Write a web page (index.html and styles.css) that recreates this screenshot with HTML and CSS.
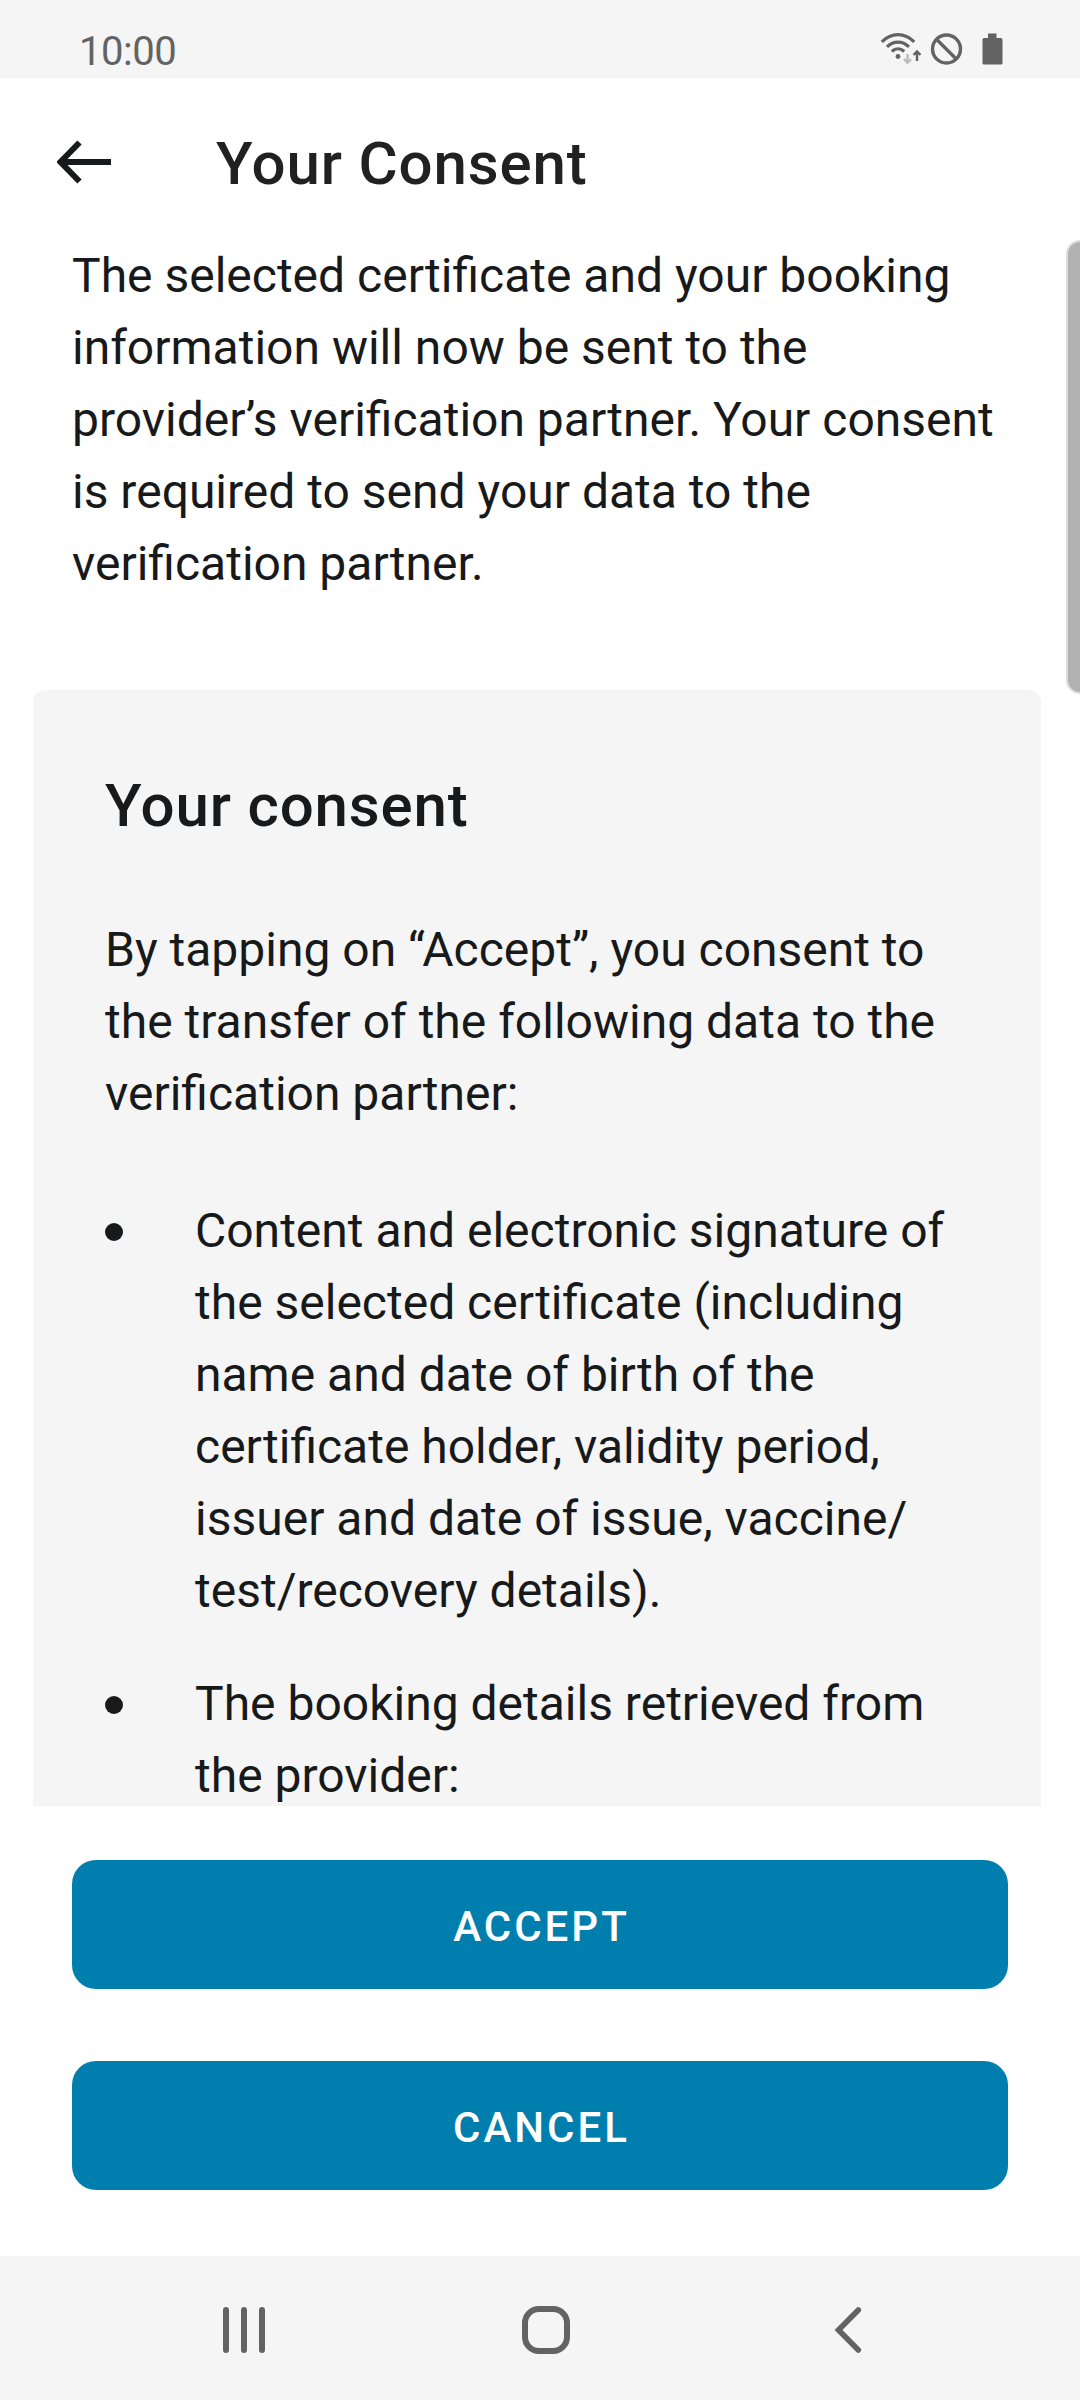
FILE: index.html
```html
<!DOCTYPE html>
<html lang="en">
<head>
<meta charset="utf-8">
<title>Your Consent</title>
<link rel="stylesheet" href="styles.css">
</head>
<body>
<div class="screen">
  <div class="status-bar">
    <span class="clock">10:00</span>
    <svg class="status-icons" width="140" height="48" viewBox="0 0 140 48" aria-hidden="true">
      <g fill="none" stroke="#636363" stroke-width="3.2">
        <path d="M1.8 16.8C11.5 7.2 24.5 7.2 34.200 16.800"/>
        <path d="M7 21.800C13.500 15.500 22.500 15.500 29 21.800"/>
        <path d="M11.800 26.500C15.500 23 20.500 23 24.200 26.500"/>
      </g>
      <circle cx="18" cy="31.500" r="2.400" fill="#636363"/>
      <path d="M27.500 29v8.500M24 34.200l3.500 3.600 3.500-3.600" fill="none" stroke="#bdbdbd" stroke-width="2.400"/>
      <path d="M37 36V27M33.500 30l3.500-3.600 3.500 3.600" fill="none" stroke="#636363" stroke-width="2.400"/>
      <g fill="none" stroke="#636363" stroke-width="3.400">
        <circle cx="66.500" cy="24" r="14"/>
        <path d="M56.500 14.200l20 20"/>
      </g>
      <path d="M108 8.500h8.500v4.500h4.500q1.500 0 1.500 1.500v23.500q0 1.500-1.500 1.500h-17q-1.500 0-1.500-1.500v-23.500q0-1.500 1.500-1.500h4z" fill="#636363"/>
    </svg>
  </div>

  <header class="app-bar">
    <svg class="back-arrow" width="54" height="47" viewBox="0 0 54 47" aria-hidden="true">
      <path d="M54 22H4M22.500 2.500L3.500 22l19 19.500" fill="none" stroke="#17191a" stroke-width="6"/>
    </svg>
    <h1 class="title">Your Consent</h1>
  </header>

  <main class="content">
    <p class="intro">The selected certificate and your booking<br>information will now be sent to the<br>provider’s verification partner. Your consent<br>is required to send your data to the<br>verification partner.</p>
    <section class="card">
      <h2 class="card-title">Your consent</h2>
      <p class="card-text">By tapping on “Accept”, you consent to<br>the transfer of the following data to the<br>verification partner:</p>
      <ul class="data-list">
        <li class="data-item">Content and electronic signature of<br>the selected certificate (including<br>name and date of birth of the<br>certificate holder, validity period,<br>issuer and date of issue, vaccine/<br>test/recovery details).</li>
        <li class="data-item">The booking details retrieved from<br>the provider:</li>
      </ul>
    </section>
    <div class="scroll-thumb"></div>
  </main>

  <div class="actions">
    <button class="button">ACCEPT</button>
    <button class="button">CANCEL</button>
  </div>

  <nav class="nav-bar">
    <svg width="42" height="46" viewBox="0 0 42 46" aria-hidden="true">
      <path d="M3 3v40M21 3v40M39 3v40" stroke="#636363" stroke-width="6" stroke-linecap="round"/>
    </svg>
    <svg width="48" height="48" viewBox="0 0 48 48" aria-hidden="true">
      <rect x="3" y="3" width="42" height="42" rx="14" fill="none" stroke="#636363" stroke-width="6"/>
    </svg>
    <svg width="35" height="46" viewBox="0 0 35 46" aria-hidden="true">
      <path d="M31.300 3L11.500 23l19.800 20" fill="none" stroke="#636363" stroke-width="5.600" stroke-linecap="round"/>
    </svg>
  </nav>
</div>
</body>
</html>
```

FILE: styles.css
```css
* { box-sizing: border-box; }

body {
  margin: 0;
  background: #fff;
  font-family: Roboto, "Liberation Sans", sans-serif;
  color: #17191a;
}

.screen {
  display: flex;
  flex-direction: column;
  width: 1080px;
  height: 2400px;
  overflow: hidden;
}

.status-bar {
  display: flex;
  justify-content: space-between;
  height: 78px;
  padding: 25px 60px 0 79px;
  background: #f5f5f5;
}

.clock {
  font-size: 40px;
  line-height: 54px;
  letter-spacing: -0.5px;
  color: #636363;
}

.status-icons { display: block; }

.app-bar {
  display: flex;
  align-items: center;
  gap: 105px;
  height: 162px;
  padding: 9px 57px 0;
}

.title, .card-title {
  margin: 0;
  font-size: 60px;
  font-weight: 500;
  line-height: 72px;
  letter-spacing: 0.85px;
}

.title { color: #212121; }

.content {
  position: relative;
  height: 1566px;
  padding: 0 39px 0 33px;
  overflow: hidden;
  font-size: 48px;
  line-height: 72px;
  white-space: nowrap;
}

.intro {
  margin: 0 0 90px;
  padding-left: 39px;
}

.card {
  padding: 80px 72px 72px;
  background: #f5f5f5;
  border-radius: 12px;
}

.card-text { margin: 72px 0 65px; }

.data-list {
  display: flex;
  flex-direction: column;
  gap: 41px;
  margin: 0;
  padding: 0;
  list-style: none;
}

.data-item {
  display: grid;
  grid-template-columns: 18px 1fr;
  gap: 72px;
}

.data-item::before {
  content: "";
  width: 18px;
  height: 18px;
  margin-top: 28px;
  border-radius: 50%;
  background: #17191a;
}

.scroll-thumb {
  position: absolute;
  top: 0;
  right: -14px;
  width: 28px;
  height: 454px;
  border: 2px solid #dedede;
  border-radius: 14px;
  background: #b2b2b2;
}

.actions {
  display: flex;
  flex-direction: column;
  gap: 72px;
  height: 450px;
  padding: 54px 72px 0;
}

.button {
  height: 129px;
  padding: 3px 0 0 3px;
  border: 0;
  border-radius: 24px;
  background: #007fae;
  color: #fff;
  font: 500 42px Roboto, sans-serif;
  letter-spacing: 3px;
}

.nav-bar {
  display: flex;
  align-items: center;
  justify-content: space-between;
  height: 144px;
  padding: 4px 218px 0 223px;
  background: #f5f5f5;
}
```
